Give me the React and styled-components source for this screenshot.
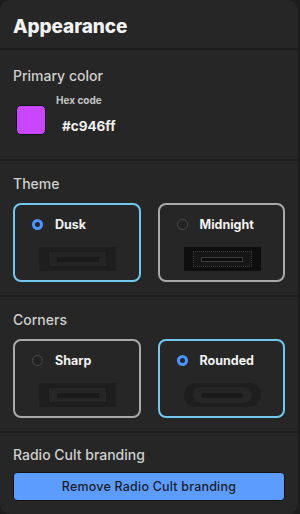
import React, { useState } from "react";
import styled, { createGlobalStyle, css } from "styled-components";

const GlobalStyle = createGlobalStyle`
    html, body {
        margin: 0;
        padding: 0;
        background: #1c1c1c;
        font-family: "Inter", "Open Sans", sans-serif;
    }
    * { box-sizing: border-box; }
`;

const themes = [
    { id: "dusk", label: "Dusk" },
    { id: "midnight", label: "Midnight" },
];

const corners = [
    { id: "sharp", label: "Sharp" },
    { id: "rounded", label: "Rounded" },
];

const App = () => {
    const [theme, setTheme] = useState("dusk");
    const [corner, setCorner] = useState("rounded");

    return (
        <>
            <GlobalStyle />
            <Panel>
                <Header>Appearance</Header>

                <Section first>
                    <Label>Primary color</Label>
                    <ColorRow>
                        <Swatch color="#c946ff" />
                        <HexBlock>
                            <HexTitle>Hex code</HexTitle>
                            <HexValue>#c946ff</HexValue>
                        </HexBlock>
                    </ColorRow>
                </Section>

                <Section>
                    <Label>Theme</Label>
                    <Options>
                        {themes.map((t) => (
                            <Option key={t.id} selected={theme === t.id} onClick={() => setTheme(t.id)}>
                                <OptionTop>
                                    <Radio selected={theme === t.id} />
                                    <OptionName>{t.label}</OptionName>
                                </OptionTop>
                                <Preview variant={t.id}>
                                    <PreviewInner variant={t.id}>
                                        <PreviewBar variant={t.id} />
                                    </PreviewInner>
                                </Preview>
                            </Option>
                        ))}
                    </Options>
                </Section>

                <Section>
                    <Label>Corners</Label>
                    <Options>
                        {corners.map((c) => (
                            <Option key={c.id} selected={corner === c.id} onClick={() => setCorner(c.id)}>
                                <OptionTop>
                                    <Radio selected={corner === c.id} />
                                    <OptionName>{c.label}</OptionName>
                                </OptionTop>
                                <Preview variant={c.id}>
                                    <PreviewInner variant={c.id}>
                                        <PreviewBar variant={c.id} />
                                    </PreviewInner>
                                </Preview>
                            </Option>
                        ))}
                    </Options>
                </Section>

                <Section last>
                    <Label>Radio Cult branding</Label>
                    <Button>Remove Radio Cult branding</Button>
                </Section>
            </Panel>
        </>
    );
};

const Panel = styled.div`
    width: 298px;
    height: 514px;
    background: #262626;
    border-radius: 10px;
    overflow: hidden;
    display: flex;
    flex-direction: column;
`;

const Header = styled.h1`
    margin: 0;
    height: 50px;
    flex: none;
    padding: 15px 13px 0;
    font-size: 19px;
    line-height: 24px;
    font-weight: 800;
    color: #f2f2f2;
    letter-spacing: -0.1px;
    border-bottom: 2px solid #1d1d1d;
`;

const Section = styled.div`
    flex: none;
    padding: 13px 13px 13px;
    border-bottom: 2px solid #1d1d1d;
    ${(p) => p.first && css`
        padding: 16px 13px 24px;
    `}
    ${(p) => p.last && css`
        border-bottom: none;
        padding-top: 12px;
    `}
`;

const Label = styled.div`
    font-size: 14px;
    font-weight: 500;
    color: #cfcfcf;
    line-height: 20px;
`;

const ColorRow = styled.div`
    display: flex;
    align-items: flex-start;
    gap: 10px;
    margin-top: 8px;
    padding-left: 3px;
`;

const Swatch = styled.div`
    width: 30px;
    height: 30px;
    margin-top: 11px;
    border-radius: 5px;
    background: ${(p) => p.color};
    border: 1px solid #111;
`;

const HexBlock = styled.div`
    display: flex;
    flex-direction: column;
`;

const HexTitle = styled.div`
    font-size: 10px;
    font-weight: 700;
    color: #c4c4c4;
    line-height: 12px;
`;

const HexValue = styled.div`
    font-size: 13.5px;
    font-weight: 700;
    color: #f0f0f0;
    margin: 11px 0 0 6px;
    line-height: 18px;
`;

const Options = styled.div`
    display: grid;
    grid-template-columns: 1fr 1fr;
    gap: 17px;
    margin-top: 9px;
`;

const Option = styled.div`
    height: 79px;
    border-radius: 8px;
    border: 2px solid ${(p) => (p.selected ? "#72c8ee" : "#a9a9a9")};
    padding: 10px 0 0 17px;
    display: flex;
    flex-direction: column;
    cursor: pointer;
`;

const OptionTop = styled.div`
    display: flex;
    align-items: center;
    gap: 12px;
    height: 18px;
`;

const Radio = styled.span`
    width: 11px;
    height: 11px;
    border-radius: 50%;
    flex: none;
    ${(p) => p.selected ? css`
        background: #262626;
        border: 3.5px solid #4d93ff;
    ` : css`
        background: #232323;
        border: 1px solid #4a4a4a;
    `}
`;

const OptionName = styled.span`
    font-size: 12.5px;
    font-weight: 700;
    color: #f2f2f2;
`;

const Preview = styled.div`
    width: 77px;
    height: 24px;
    margin: 14px 0 0 7px;
    padding: 4px 9px;
    display: flex;
    ${(p) => p.variant === "dusk" && css`background: #1e1e1e;`}
    ${(p) => p.variant === "midnight" && css`background: #0e0e0e;`}
    ${(p) => p.variant === "sharp" && css`background: #1e1e1e;`}
    ${(p) => p.variant === "rounded" && css`
        background: #1e1e1e;
        border-radius: 12px;
    `}
`;

const PreviewInner = styled.div`
    flex: 1;
    display: flex;
    align-items: center;
    justify-content: center;
    ${(p) => p.variant === "dusk" && css`background: #242424; border: 1px solid #1b1b1b;`}
    ${(p) => p.variant === "midnight" && css`background: #161616; border: 1px dotted #3a3a3a;`}
    ${(p) => p.variant === "sharp" && css`background: #262626; border: 1px solid #1b1b1b;`}
    ${(p) => p.variant === "rounded" && css`background: #262626; border-radius: 8px;`}
`;

const PreviewBar = styled.div`
    width: 42px;
    height: 5px;
    ${(p) => p.variant === "midnight" ? css`
        background: #0c0c0c;
        border: 1px solid #3c3c3c;
    ` : css`
        background: #1a1a1a;
    `}
    ${(p) => p.variant === "rounded" && css`border-radius: 3px;`}
`;

const Button = styled.button`
    display: block;
    width: 100%;
    height: 29px;
    margin-top: 7px;
    background: #5c9cff;
    border: 1px solid #111;
    border-radius: 4px;
    color: #1e1e1e;
    font-family: inherit;
    font-size: 12.5px;
    letter-spacing: 0.2px;
    font-weight: 500;
    cursor: pointer;
`;

export default App;
